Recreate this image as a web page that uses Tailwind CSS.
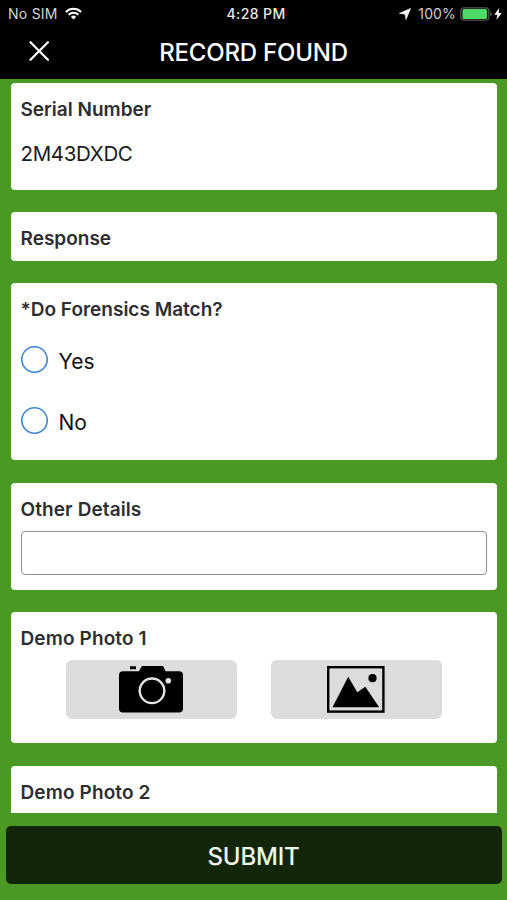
<!DOCTYPE html>
<html lang="en">
<head>
<meta charset="utf-8">
<title>Record Found</title>
<script src="https://cdn.jsdelivr.net/npm/@tailwindcss/browser@4"></script>
</head>
<body class="w-[507px] h-[900px] overflow-hidden bg-[#4a9924] font-[Inter,sans-serif] flex flex-col whitespace-nowrap text-[#2e2e30]">
  <header class="h-[79px] shrink-0 bg-black text-white flex flex-col">
    <div class="h-[27px] grid grid-cols-3 items-center pl-2 pr-[5px] text-[14px] leading-[27px]">
      <div class="flex items-center gap-[7px] text-[#d4d4d4]">
        <span class="tracking-[0.25px]">No SIM</span>
        <svg class="w-[17px] h-[13px]" viewBox="0 0 17 13" fill="none" stroke="#fff" stroke-width="2.1"><path d="M.9 4.9a10.8 10.8 0 0 1 15.2 0M3.6 7.7a7 7 0 0 1 9.8 0"/><path d="M8.5 12.5 5.9 9.9a3.7 3.7 0 0 1 5.2 0z" fill="#fff" stroke="none"/></svg>
      </div>
      <span class="text-center text-[#e8e8e8] font-medium tracking-[0.4px] pl-[2px] text-[14px]">4:28 PM</span>
      <div class="flex items-center justify-end text-[#cfcfcf]">
        <svg class="w-[12px] h-[12px] mr-[7px]" viewBox="0 0 12 12" fill="#fff" stroke="#fff" stroke-width=".6" stroke-linejoin="round"><path d="M11.6.4 7 11.400 6.200 6.200.4 5.300z"/></svg>
        <span class="mr-[4px] tracking-[0.15px]">100%</span>
        <svg class="w-[32px] h-[14px] mr-[2px]" viewBox="0 0 32 14"><rect x=".8" y=".8" width="28" height="12.4" rx="3.2" fill="none" stroke="#545454" stroke-width="1.3"/><rect x="2.5" y="2" width="24.5" height="10" rx="1.5" fill="#4cd964"/><path d="M30 4.500q1.800.8 1.800 2.500T30 9.500z" fill="#545454"/></svg>
        <svg class="w-[8px] h-[12px]" viewBox="0 0 8 12" fill="#fff"><path d="M5.200 0 .3 6.800h3L2.400 12 7.700 5h-3z"/></svg>
      </div>
    </div>
    <div class="h-[52px] grid grid-cols-[79px_1fr_79px] items-center">
      <svg class="w-[20px] h-[20px] ml-[29px] -mt-[4px]" viewBox="0 0 20 20" stroke="#fff" stroke-width="2.300" stroke-linecap="round"><path d="M1.500 1.300 18.900 18.700M18.900 1.300 1.500 18.700"/></svg>
      <h1 class="text-center text-[24px] leading-[30px] font-medium tracking-[-0.2px] -mt-[1px]">RECORD FOUND</h1>
    </div>
  </header>

  <main class="h-[734px] shrink-0 overflow-hidden px-[10.5px] pt-[4px] flex flex-col gap-[22.5px]">
    <section class="h-[106.5px] shrink-0 bg-white rounded-[4px] px-[10px] pt-[15px]">
      <h2 class="text-[19px] leading-[24px] font-semibold">Serial Number</h2>
      <p class="text-[20.500px] leading-[26px] mt-[19px] tracking-[-0.35px] text-[#1a1a1a]">2M43DXDC</p>
    </section>
    <section class="h-[48.500px] shrink-0 bg-white rounded-[4px] px-[10px] pt-[15px]">
      <h2 class="text-[19px] leading-[24px] font-semibold">Response</h2>
    </section>
    <section class="h-[177px] shrink-0 bg-white rounded-[4px] px-[10px] pt-[15px]">
      <h2 class="text-[19px] leading-[24px] font-semibold">*Do Forensics Match?</h2>
      <div class="mt-[24px] h-[27px] flex items-center gap-[11px]">
        <svg class="size-[27px]" viewBox="0 0 27 27"><circle cx="13.500" cy="13.500" r="12.700" fill="none" stroke="#3b86d3" stroke-width="1.600"/></svg>
        <span class="text-[21px] leading-[26px] pt-[5px] text-[#111]">Yes</span>
      </div>
      <div class="mt-[34px] h-[27px] flex items-center gap-[11px]">
        <svg class="size-[27px]" viewBox="0 0 27 27"><circle cx="13.500" cy="13.500" r="12.700" fill="none" stroke="#3b86d3" stroke-width="1.600"/></svg>
        <span class="text-[21px] leading-[26px] pt-[5px] text-[#111]">No</span>
      </div>
    </section>
    <section class="h-[107px] shrink-0 bg-white rounded-[4px] px-[10px] pt-[15px]">
      <h2 class="text-[19px] leading-[24px] font-semibold tracking-[0.1px]">Other Details</h2>
      <div class="mt-[9px] h-[44px] rounded-[4px] border border-[#8e8e8e]"></div>
    </section>
    <section class="h-[131px] shrink-0 bg-white rounded-[4px] px-[10px] pt-[15px]">
      <h2 class="text-[19px] leading-[24px] font-semibold tracking-[0.12px]">Demo Photo 1</h2>
      <div class="mt-[9px] pl-[45.500px] pr-[45px] flex justify-between">
        <div class="w-[170.500px] h-[58.500px] rounded-[6px] bg-[#dcdcdc] flex justify-center pt-[6px]">
          <svg class="w-[64px] h-[47px]" viewBox="0 0 64 47"><path d="M11 .3h6v2.900h-6zM23.800 0h19.600q.8 0 1.100.8L46.500 5.300H60q4 0 4 4V42.500q0 4-4 4H4q-4 0-4-4V9.300q0-4 4-4H20l2.400-4.500q.4-.8 1.400-.8z"/><circle cx="33" cy="24.800" r="12.300" fill="none" stroke="#e4e4e4" stroke-width="2.400"/><circle cx="49.300" cy="14.700" r="2.800" fill="#e4e4e4"/></svg>
        </div>
        <div class="w-[170.500px] h-[58.500px] rounded-[6px] bg-[#dcdcdc] flex justify-center pt-[6px]">
          <svg class="w-[58px] h-[47px]" viewBox="0 0 58 47"><rect x="1.200" y="1.200" width="55.200" height="44.400" fill="none" stroke="#000" stroke-width="2.400"/><path d="M5.500 41.200 21.200 10.800 30.300 26.200 38.300 20.700 52.200 41.200z"/><circle cx="45.500" cy="12.200" r="4.100"/></svg>
        </div>
      </div>
    </section>
    <section class="h-[131px] shrink-0 bg-white rounded-[4px] px-[10px] pt-[15px]">
      <h2 class="text-[19px] leading-[24px] font-semibold tracking-[0.12px]">Demo Photo 2</h2>
    </section>
  </main>

  <footer class="px-[5.500px] pt-[12.500px]">
    <button class="block w-full h-[58.500px] rounded-[5px] bg-[#14260a] text-[#f1f5ee] text-[24px] leading-[30px] pt-[5px] font-medium tracking-[-0.2px]">SUBMIT</button>
  </footer>
</body>
</html>
